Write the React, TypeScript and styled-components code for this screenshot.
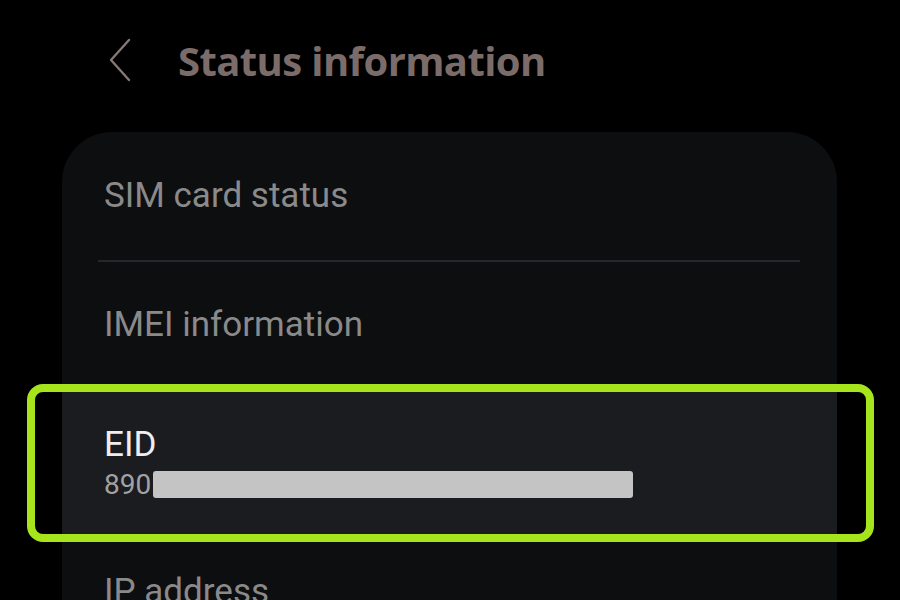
import React from 'react';
import styled, { createGlobalStyle } from 'styled-components';

const GlobalStyle = createGlobalStyle`
  html, body {
    margin: 0;
    padding: 0;
    background: #000;
    overflow: hidden;
  }
  body {
    font-family: Roboto, "Noto Sans", sans-serif;
  }
`;

const Screen = styled.div`
  width: 900px;
  height: 600px;
  background: #000;
  overflow: hidden;
`;

const Header = styled.div`
  display: flex;
  align-items: center;
  height: 120px;
  padding-left: 104px;
  box-sizing: border-box;
`;

const BackButton = styled.button`
  display: flex;
  align-items: center;
  justify-content: center;
  width: 32px;
  height: 48px;
  padding: 0;
  margin-right: 42px;
  border: none;
  background: none;
  color: #857875;
`;

const Title = styled.h1`
  margin: 0;
  font-family: "Open Sans", sans-serif;
  font-weight: 700;
  font-size: 40px;
  letter-spacing: -0.6px;
  color: #7b6c69;
`;

const Card = styled.div`
  margin: 12px 0 0 62px;
  width: 775px;
  background: #0d0e10;
  border-radius: 50px 50px 0 0;
  padding-bottom: 40px;
`;

const Row = styled.div<{ $height: number; $active?: boolean }>`
  position: relative;
  display: flex;
  flex-direction: column;
  justify-content: center;
  height: ${p => p.$height}px;
  padding-left: 42px;
  background: ${p => (p.$active ? '#1a1c20' : 'transparent')};
`;

const Label = styled.div<{ $active?: boolean }>`
  font-size: 35px;
  line-height: 40px;
  color: ${p => (p.$active ? '#eeeeee' : '#8a8a8a')};
`;

const Value = styled.div`
  display: flex;
  align-items: center;
  margin-top: 5px;
  font-size: 28px;
  line-height: 30px;
  color: #a2a2a2;
`;

const Redacted = styled.span`
  display: inline-block;
  width: 480px;
  height: 27px;
  margin-left: 2px;
  border-radius: 3px;
  background: #c4c4c4;
`;

const Divider = styled.div`
  height: 2px;
  margin: 0 37px 0 36px;
  background: #26272a;
`;

const Highlight = styled.div`
  position: absolute;
  left: -35px;
  right: -37px;
  top: -4px;
  bottom: -6px;
  border: 8px solid #a6e41c;
  border-radius: 16px;
  pointer-events: none;
`;

const IpRow = styled.div`
  padding: 36px 0 0 42px;
  font-size: 35px;
  line-height: 40px;
  color: #8a8a8a;
`;

export default function App() {
  return (
    <Screen>
      <GlobalStyle />
      <Header>
        <BackButton aria-label="Back">
          <svg width="26" height="44" viewBox="0 0 26 44" fill="none">
            <path d="M22 2 L4 22 L22 42" stroke="currentColor" strokeWidth="2.4" strokeLinecap="round" strokeLinejoin="round" />
          </svg>
        </BackButton>
        <Title>Status information</Title>
      </Header>
      <Card>
        <Row $height={128}>
          <Label>SIM card status</Label>
        </Row>
        <Divider />
        <Row $height={126}>
          <Label>IMEI information</Label>
        </Row>
        <Row $height={148} $active>
          <Label $active>EID</Label>
          <Value>
            890<Redacted />
          </Value>
          <Highlight />
        </Row>
        <IpRow>IP address</IpRow>
      </Card>
    </Screen>
  );
}
